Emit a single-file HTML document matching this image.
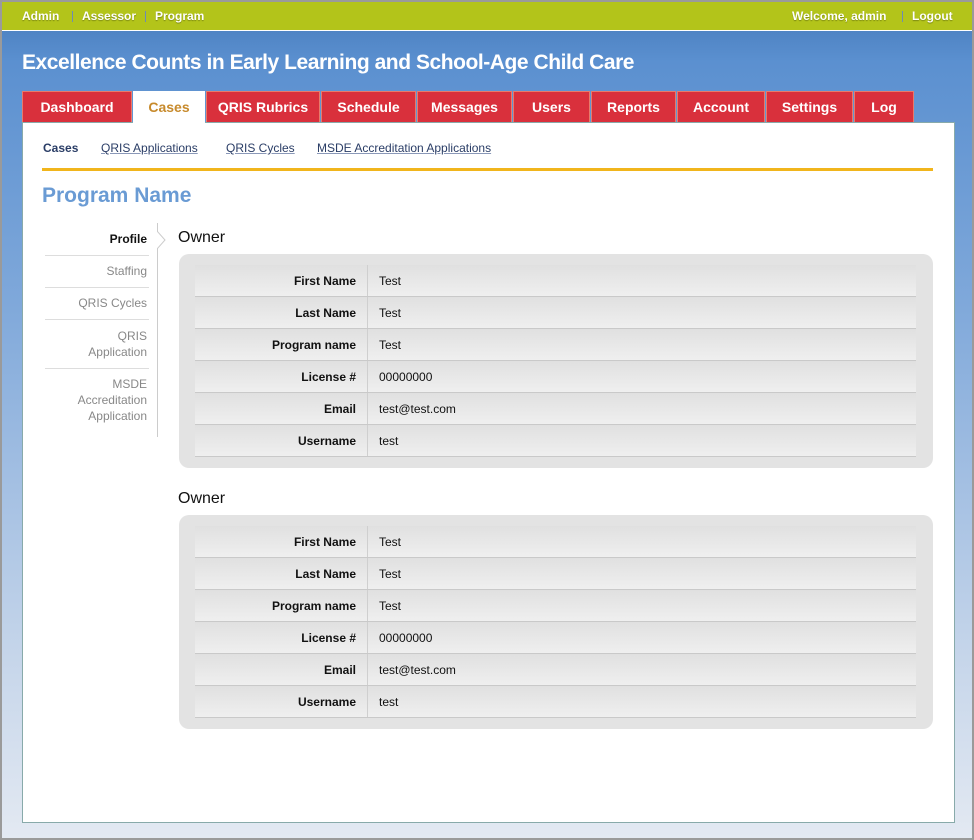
<!DOCTYPE html>
<html><head><meta charset="utf-8"><style>
*{margin:0;padding:0;box-sizing:border-box}
body{width:974px;height:840px;overflow:hidden;font-family:"Liberation Sans",sans-serif;position:relative;background:#9a9a9a}
.frame{position:absolute;left:2px;top:2px;width:970px;height:836px;background:linear-gradient(#4f84c4 29px,#5b90d0 60px,#7fa8da 300px,#c5d5ea 650px,#e3e9f2 836px)}
.top{position:absolute;left:0;top:0;width:970px;height:29px;background:#b3c41a;border-bottom:1px solid #fff;color:#fff;font-size:12px;font-weight:bold}
.top span{position:absolute;top:7px;text-shadow:0 1px 1px rgba(0,0,0,.3)}
.sep{position:absolute;top:9px;width:1px;height:11px;background:#6d8bb5}
h1{position:absolute;left:20px;top:49px;color:#fff;font-size:21px;font-weight:bold;letter-spacing:-.45px}
.tab{position:absolute;top:89px;height:31px;background:#d9303c;border:1px solid #e87a6a;border-bottom:none;color:#fff;font-weight:bold;font-size:14px;text-align:center;line-height:31px}
.tab.on{background:#fff;color:#c78a2c;border-color:#fff;height:32px}
.panel{position:absolute;left:20px;top:120px;width:933px;height:701px;background:#fff;border:1px solid #8aa;}
.sub{position:absolute;top:139px;font-size:12px;color:#2a3d66;text-decoration:underline;text-decoration-color:#8a98b8}
.side{position:absolute;left:43px;width:102px;text-align:right;font-size:12px;color:#888;line-height:16px}
.hr{position:absolute;left:43px;width:104px;height:1px;background:#ddd}
.own{position:absolute;left:176px;font-size:16px;color:#111}
.box{position:absolute;left:177px;width:754px;height:214px;background:#e3e3e3;border-radius:10px;padding:11px 17px 0 16px}
.row{height:32px;border-bottom:1px solid #c9c9c9;background:linear-gradient(#e0e0e0,#efefef);display:flex;font-size:12px;line-height:32px;color:#111}
.row b{width:173px;text-align:right;padding-right:11px;border-right:1px solid #cfcfcf}
.row span{padding-left:11px}
</style></head><body><div class="frame">
<div class="top"><span style="left:20px">Admin</span><div class="sep" style="left:70px"></div><span style="left:80px">Assessor</span><div class="sep" style="left:143px"></div><span style="left:153px">Program</span><span style="left:790px">Welcome, admin</span><div class="sep" style="left:900px"></div><span style="left:910px">Logout</span></div>
<h1>Excellence Counts in Early Learning and School-Age Child Care</h1>
<div class="panel"></div>
<div class="tab" style="left:20px;width:110px">Dashboard</div>
<div class="tab on" style="left:131px;width:72px">Cases</div>
<div class="tab" style="left:204px;width:114px">QRIS Rubrics</div>
<div class="tab" style="left:319px;width:95px">Schedule</div>
<div class="tab" style="left:415px;width:95px">Messages</div>
<div class="tab" style="left:511px;width:77px">Users</div>
<div class="tab" style="left:589px;width:85px">Reports</div>
<div class="tab" style="left:675px;width:88px">Account</div>
<div class="tab" style="left:764px;width:87px">Settings</div>
<div class="tab" style="left:852px;width:60px">Log</div>
<div class="sub" style="left:41px;text-decoration:none;font-weight:bold">Cases</div>
<div class="sub" style="left:99px">QRIS Applications</div>
<div class="sub" style="left:224px">QRIS Cycles</div>
<div class="sub" style="left:315px">MSDE Accreditation Applications</div>
<div style="position:absolute;left:40px;top:166px;width:891px;height:3px;background:#f1b51c"></div>
<div style="position:absolute;left:40px;top:182px;font-size:21px;font-weight:bold;color:#6a9bd4">Program Name</div>
<div style="position:absolute;left:155px;top:221px;width:1px;height:214px;background:#ccc"></div>
<svg style="position:absolute;left:155px;top:229px" width="10" height="18"><path d="M0 0 L8 9 L0 18" fill="#fff" stroke="#ccc"/></svg>
<div class="side" style="top:229px;color:#111;font-weight:bold">Profile</div>
<div class="hr" style="top:253px"></div>
<div class="side" style="top:261px">Staffing</div>
<div class="hr" style="top:285px"></div>
<div class="side" style="top:293px">QRIS Cycles</div>
<div class="hr" style="top:317px"></div>
<div class="side" style="top:326px">QRIS<br>Application</div>
<div class="hr" style="top:366px"></div>
<div class="side" style="top:374px">MSDE<br>Accreditation<br>Application</div>
<div class="own" style="top:227px">Owner</div>
<div class="box" style="top:252px">
<div class="row"><b>First Name</b><span>Test</span></div><div class="row"><b>Last Name</b><span>Test</span></div><div class="row"><b>Program name</b><span>Test</span></div><div class="row"><b>License #</b><span>00000000</span></div><div class="row"><b>Email</b><span>test@test.com</span></div><div class="row"><b>Username</b><span>test</span></div></div>
<div class="own" style="top:488px">Owner</div>
<div class="box" style="top:513px">
<div class="row"><b>First Name</b><span>Test</span></div><div class="row"><b>Last Name</b><span>Test</span></div><div class="row"><b>Program name</b><span>Test</span></div><div class="row"><b>License #</b><span>00000000</span></div><div class="row"><b>Email</b><span>test@test.com</span></div><div class="row"><b>Username</b><span>test</span></div></div>
</div></body></html>
